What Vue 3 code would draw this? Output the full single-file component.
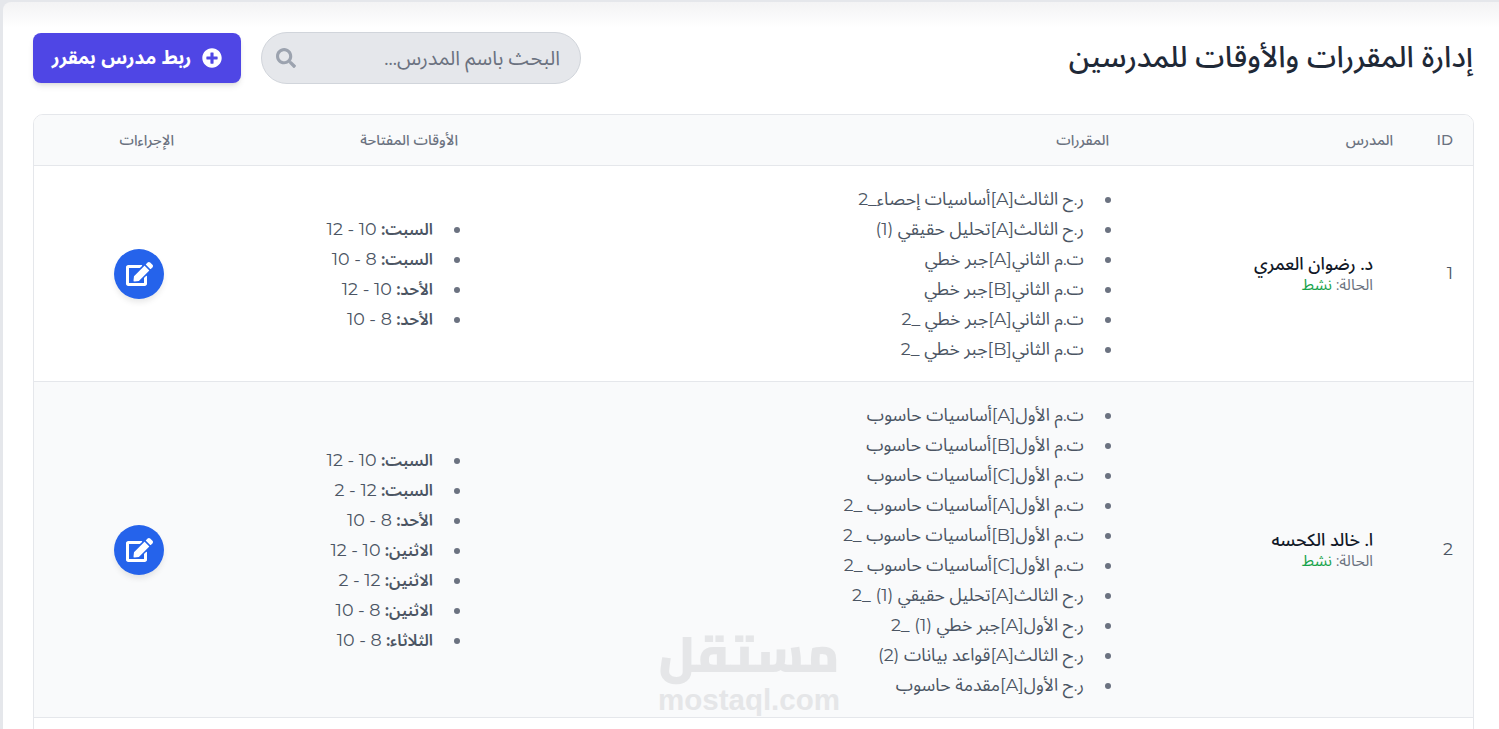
<script setup>
import { ref } from 'vue';

const searchText = ref('');

const teachers = ref([
  {
    id: 1,
    name: 'د. رضوان العمري',
    status: 'نشط',
    courses: [
      'ر.ح الثالث[A]أساسيات إحصاء_2',
      'ر.ح الثالث[A]تحليل حقيقي (1)',
      'ت.م الثاني[A]جبر خطي',
      'ت.م الثاني[B]جبر خطي',
      'ت.م الثاني[A]جبر خطي _2',
      'ت.م الثاني[B]جبر خطي _2'
    ],
    hours: [
      { day: 'السبت:', time: '10 - 12' },
      { day: 'السبت:', time: '8 - 10' },
      { day: 'الأحد:', time: '10 - 12' },
      { day: 'الأحد:', time: '8 - 10' }
    ]
  },
  {
    id: 2,
    name: 'ا. خالد الكحسه',
    status: 'نشط',
    courses: [
      'ت.م الأول[A]أساسيات حاسوب',
      'ت.م الأول[B]أساسيات حاسوب',
      'ت.م الأول[C]أساسيات حاسوب',
      'ت.م الأول[A]أساسيات حاسوب _2',
      'ت.م الأول[B]أساسيات حاسوب _2',
      'ت.م الأول[C]أساسيات حاسوب _2',
      'ر.ح الثالث[A]تحليل حقيقي (1) _2',
      'ر.ح الأول[A]جبر خطي (1) _2',
      'ر.ح الثالث[A]قواعد بيانات (2)',
      'ر.ح الأول[A]مقدمة حاسوب'
    ],
    hours: [
      { day: 'السبت:', time: '10 - 12' },
      { day: 'السبت:', time: '12 - 2' },
      { day: 'الأحد:', time: '8 - 10' },
      { day: 'الاثنين:', time: '10 - 12' },
      { day: 'الاثنين:', time: '12 - 2' },
      { day: 'الاثنين:', time: '8 - 10' },
      { day: 'الثلاثاء:', time: '8 - 10' }
    ]
  }
]);
</script>

<template>
  <div class="page" dir="rtl">
    <div class="card">
      <div class="top-bar">
        <h1>إدارة المقررات والأوقات للمدرسين</h1>
        <div class="tools">
          <div class="search-box">
            <input v-model="searchText" type="text" placeholder="البحث باسم المدرس..." />
            <svg class="search-icon" viewBox="0 0 512 512">
              <path d="M505 442.7L405.3 343c-4.5-4.5-10.6-7-17-7H372c27.6-35.3 44-79.7 44-128C416 93.1 322.9 0 208 0S0 93.1 0 208s93.1 208 208 208c48.3 0 92.7-16.4 128-44v16.3c0 6.4 2.5 12.5 7 17l99.7 99.7c9.4 9.4 24.6 9.4 33.9 0l28.3-28.3c9.4-9.4 9.4-24.6.1-34zM208 336c-70.7 0-128-57.2-128-128 0-70.7 57.2-128 128-128 70.7 0 128 57.2 128 128 0 70.7-57.2 128-128 128z" />
            </svg>
          </div>
          <button class="add-btn" type="button">
            <svg viewBox="0 0 512 512">
              <path d="M256 8C119 8 8 119 8 256s111 248 248 248 248-111 248-248S393 8 256 8zm144 276c0 6.6-5.4 12-12 12h-92v92c0 6.6-5.4 12-12 12h-56c-6.6 0-12-5.4-12-12v-92h-92c-6.6 0-12-5.4-12-12v-56c0-6.6 5.4-12 12-12h92v-92c0-6.6 5.4-12 12-12h56c6.6 0 12 5.4 12 12v92h92c6.6 0 12 5.4 12 12v56z" />
            </svg>
            <span>ربط مدرس بمقرر</span>
          </button>
        </div>
      </div>

      <div class="table-wrap">
        <table>
          <colgroup>
            <col class="col-id" />
            <col class="col-teacher" />
            <col class="col-courses" />
            <col class="col-hours" />
            <col />
          </colgroup>
          <thead>
            <tr>
              <th>ID</th>
              <th>المدرس</th>
              <th>المقررات</th>
              <th>الأوقات المفتاحة</th>
              <th>الإجراءات</th>
            </tr>
          </thead>
          <tbody>
            <tr v-for="teacher in teachers" :key="teacher.id">
              <td class="id-cell">{{ teacher.id }}</td>
              <td class="teacher-cell">
                <div class="teacher-name">{{ teacher.name }}</div>
                <div class="teacher-status">الحالة: <span>{{ teacher.status }}</span></div>
              </td>
              <td>
                <ul>
                  <li v-for="course in teacher.courses" :key="course">{{ course }}</li>
                </ul>
              </td>
              <td>
                <ul>
                  <li v-for="(hour, index) in teacher.hours" :key="index"><b>{{ hour.day }}</b> {{ hour.time }}</li>
                </ul>
              </td>
              <td>
                <button class="edit-btn" type="button">
                  <svg viewBox="0 0 576 512">
                    <path d="M402.6 83.2l90.2 90.2c3.8 3.8 3.8 10 0 13.8L274.4 405.6l-92.8 10.3c-12.4 1.4-22.9-9.1-21.5-21.5l10.3-92.8L388.8 83.2c3.8-3.8 10-3.8 13.8 0zm162-22.9l-48.8-48.8c-15.2-15.2-39.9-15.2-55.2 0l-35.4 35.4c-3.8 3.8-3.8 10 0 13.8l90.2 90.2c3.8 3.8 10 3.8 13.8 0l35.4-35.4c15.2-15.3 15.2-40 0-55.2zM384 346.2V448H64V128h229.8c3.2 0 6.2-1.3 8.5-3.5l40-40c7.6-7.6 2.2-20.5-8.5-20.5H48C21.5 64 0 85.5 0 112v352c0 26.5 21.5 48 48 48h352c26.5 0 48-21.5 48-48V306.2c0-10.7-12.9-16-20.5-8.5l-40 40c-2.2 2.3-3.5 5.3-3.5 8.5z" />
                  </svg>
                </button>
              </td>
            </tr>
          </tbody>
        </table>
      </div>
    </div>

    <!-- علامة مستقل المائية -->
    <div class="watermark" dir="ltr">
      <div class="wm-ar" dir="rtl">مستقل</div>
      <div class="wm-en">mostaql.com</div>
    </div>
  </div>
</template>

<style>
html,
body {
  margin: 0;
  height: 100%;
  overflow: hidden;
  background: #e5e7eb;
}
</style>

<style scoped>
.page {
  position: relative;
  height: 729px;
  overflow: hidden;
  padding: 2px 0 0 3px;
  box-sizing: border-box;
  font-family: Montserrat, "Noto Sans Arabic", "DejaVu Sans", sans-serif;
  color: #6b7280;
}

.card {
  background: linear-gradient(#f3f3f4, #ffffff 26px);
  border-top-left-radius: 8px;
  height: 100%;
  padding: 30px 25px 0 30px;
  box-sizing: border-box;
}

.top-bar {
  display: flex;
  justify-content: space-between;
  align-items: center;
  height: 52px;
  margin-bottom: 30px;
}

h1 {
  margin: 0 1px 0 0;
  font-size: 29.4px;
  font-weight: 500;
  color: #1f2937;
}

.tools {
  display: flex;
  align-items: center;
  gap: 20px;
}

.search-box {
  position: relative;
  width: 320px;
  height: 52px;
}

.search-box input {
  width: 100%;
  height: 100%;
  box-sizing: border-box;
  padding: 0 20px 0 50px;
  border: 1px solid #d1d5db;
  border-radius: 26px;
  background: #e5e7eb;
  font-family: inherit;
  font-size: 20px;
  color: #374151;
  outline: none;
}

.search-box input::placeholder {
  color: #6b7280;
}

.search-icon {
  position: absolute;
  left: 15px;
  top: 16px;
  width: 20px;
  height: 20px;
  fill: #9ca3af;
}

.add-btn {
  display: flex;
  align-items: center;
  gap: 11px;
  width: 208px;
  height: 50px;
  justify-content: center;
  border: 0;
  border-radius: 8px;
  background: #4f46e5;
  color: #ffffff;
  font-family: inherit;
  font-size: 19px;
  font-weight: 700;
  box-shadow: 0 4px 6px -1px rgba(0, 0, 0, 0.1), 0 2px 4px -2px rgba(0, 0, 0, 0.1);
}

.add-btn svg {
  width: 20px;
  height: 20px;
  fill: #ffffff;
}

.table-wrap {
  height: 640px;
  border: 1px solid #e5e7eb;
  border-radius: 10px 10px 0 0;
  overflow: hidden;
}

table {
  width: 100%;
  border-collapse: collapse;
  table-layout: fixed;
}

.col-id {
  width: 60px;
}

.col-teacher {
  width: 284px;
}

.col-courses {
  width: 651px;
}

.col-hours {
  width: 284px;
}

th {
  height: 50px;
  padding: 0 20px;
  background: #f9fafb;
  border-bottom: 1px solid #e5e7eb;
  font-size: 14.5px;
  font-weight: 500;
  color: #6b7280;
  text-align: right;
}

td {
  padding: 18px 21px 17px;
  border-bottom: 1px solid #e5e7eb;
  font-size: 17.5px;
  vertical-align: middle;
}

tbody tr:nth-child(even) td {
  background: #f9fafb;
}

.id-cell {
  color: #4b5563;
  padding-right: 20px;
  padding-bottom: 20px;
}

.teacher-cell {
  padding-right: 40px;
}

.teacher-name {
  font-size: 17.5px;
  font-weight: 500;
  line-height: 22px;
  color: #111827;
}

.teacher-status {
  font-size: 15.5px;
  line-height: 20px;
  color: #6b7280;
}

.teacher-status span {
  color: #16a34a;
}

ul {
  margin: 0;
  padding: 0 15px 0 0;
  list-style: disc;
}

li {
  padding-right: 9px;
  line-height: 30px;
  color: #4b5563;
}

li::marker {
  color: #6b7280;
}

li b {
  font-size: 16px;
  font-weight: 600;
  line-height: 1;
}

.edit-btn {
  display: flex;
  align-items: center;
  justify-content: center;
  width: 50px;
  height: 50px;
  margin-right: 9px;
  border: 0;
  border-radius: 50%;
  background: #2563eb;
  box-shadow: 0 4px 6px -1px rgba(0, 0, 0, 0.1);
}

.edit-btn svg {
  width: 27px;
  height: 24px;
  fill: #ffffff;
}

.watermark {
  position: absolute;
  left: 658px;
  top: 623px;
  width: 182px;
  text-align: center;
  color: #e5e6e8;
  pointer-events: none;
}

.wm-ar {
  font-family: Cairo, "Noto Kufi Arabic", sans-serif;
  font-size: 50px;
  font-weight: 900;
  line-height: 62px;
}

.wm-en {
  font-family: "Liberation Sans", sans-serif;
  font-size: 29.5px;
  font-weight: 700;
  line-height: 30px;
}
</style>
